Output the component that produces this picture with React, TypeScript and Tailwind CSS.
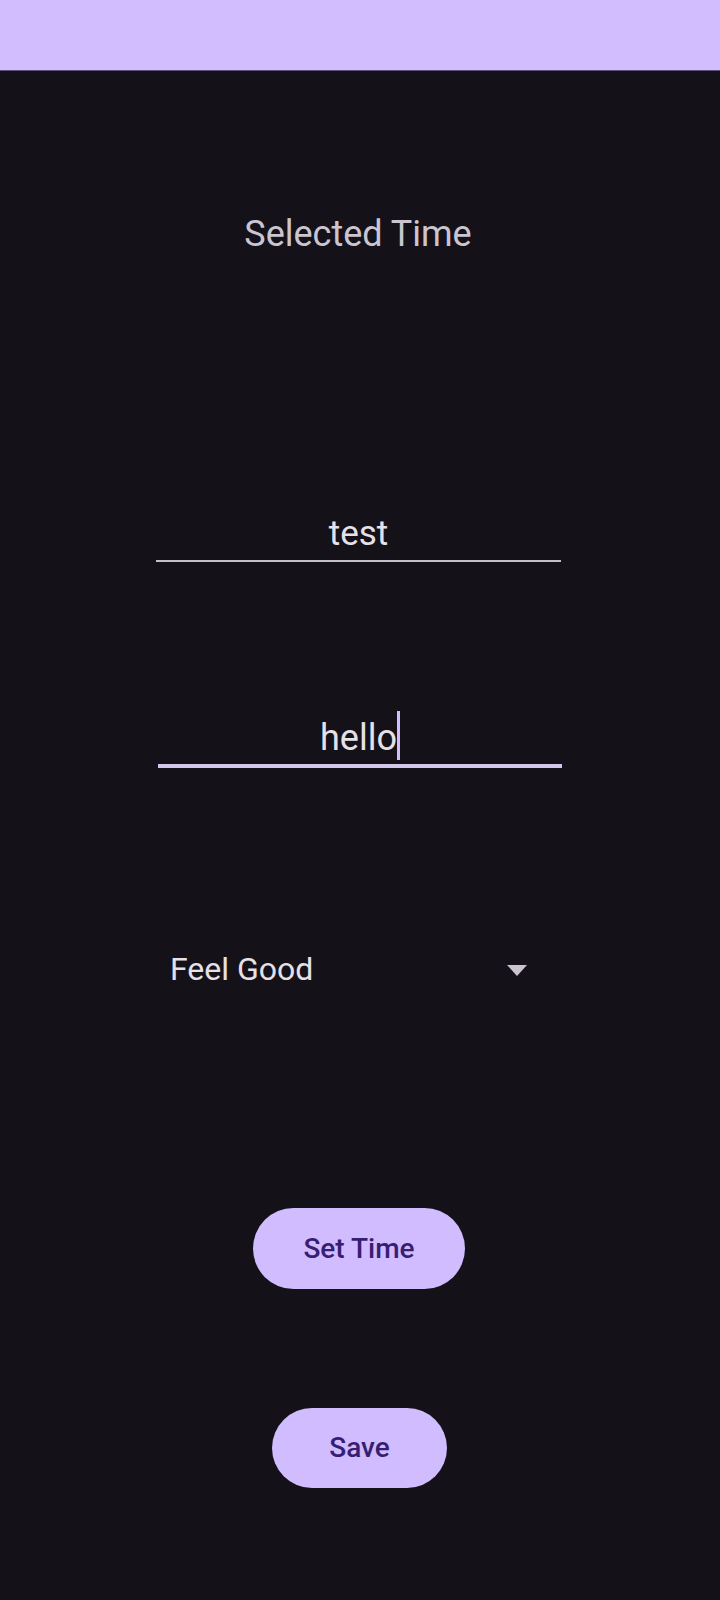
import React from "react";

export default function App() {
  return (
    <div
      className="min-h-[1600px] w-[720px] bg-[#141218] flex flex-col"
      style={{ fontFamily: "Roboto, 'Noto Sans', sans-serif" }}
    >
      <div className="h-[71px] w-full bg-[#d2bdfe] border-b border-[#5b4f7c] shrink-0" />

      <div className="mt-[145px] h-[36px] text-center text-[36px] leading-[36px] text-[#cbc5d1] pr-[4px]">
        Selected Time
      </div>

      <div className="mt-[264px] w-[405px] ml-[156px] flex flex-col">
        <div className="h-[35px] text-center text-[35px] leading-[35px] text-[#e6e0e9]">test</div>
        <div className="mt-[9px] h-[2px] bg-[#c4c0c8]" />
      </div>

      <div className="mt-[158px] w-[404px] ml-[158px] flex flex-col">
        <div className="h-[36px] flex justify-center items-start text-[36px] leading-[36px] text-[#e6e0e9]">
          <span>hello</span>
          <span className="w-[3px] h-[49px] bg-[#d0bcff] mt-[-9px]" />
        </div>
        <div className="mt-[8px] h-[4px] bg-[#d3c6ec]" />
      </div>

      <div className="mt-[185px] ml-[170px] w-[357px] h-[32px] flex items-center justify-between">
        <span className="text-[32px] leading-[32px] text-[#e6e0e9]">Feel Good</span>
        <svg width="20" height="11" viewBox="0 0 20 11" className="mt-[2px]">
          <path d="M0 0 L20 0 L10 11 Z" fill="#cac4d0" />
        </svg>
      </div>

      <div className="mt-[223px] flex justify-center">
        <button className="w-[212px] h-[81px] rounded-full bg-[#d0bcff] text-[#381e72] text-[28px] font-medium ml-[-2px]">
          Set Time
        </button>
      </div>

      <div className="mt-[119px] flex justify-center">
        <button className="w-[175px] h-[80px] rounded-full bg-[#d0bcff] text-[#381e72] text-[28px] font-medium ml-[-1px]">
          Save
        </button>
      </div>
    </div>
  );
}
